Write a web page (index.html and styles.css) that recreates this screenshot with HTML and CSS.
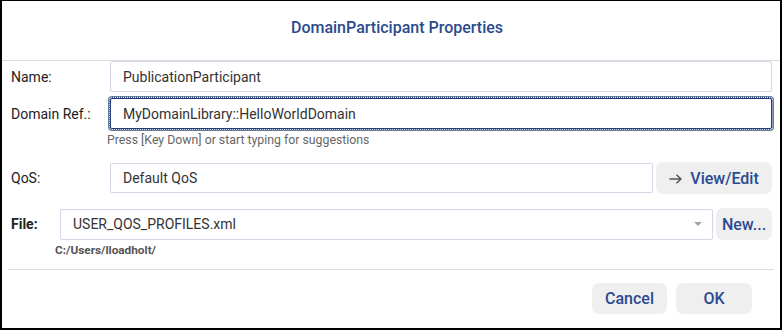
FILE: index.html
```html
<!DOCTYPE html>
<html>
<head>
<meta charset="utf-8">
<link rel="stylesheet" href="styles.css">
</head>
<body>
<div class="dialog">
  <div class="header">DomainParticipant Properties</div>
  <div class="content">
    <div class="row row-name">
      <div class="label">Name:</div>
      <div class="input">PublicationParticipant</div>
    </div>
    <div class="row row-domain">
      <div class="label">Domain Ref.:</div>
      <div class="input focused">MyDomainLibrary::HelloWorldDomain</div>
    </div>
    <div class="hint">Press [Key Down] or start typing for suggestions</div>
    <div class="row row-qos">
      <div class="label">QoS:</div>
      <div class="input qos">Default QoS</div>
      <div class="btn view">
        <svg class="arrow" width="13" height="10" viewBox="0 0 13 10"><path d="M0.5 5 H12 M7.5 0.8 L12 5 L7.5 9.2" fill="none" stroke="#555" stroke-width="1.5"/></svg>
        <span>View/Edit</span>
      </div>
    </div>
    <div class="row row-file">
      <div class="label file-label">File:</div>
      <div class="input select">
        <span>USER_QOS_PROFILES.xml</span>
        <span class="caret"></span>
      </div>
      <div class="btn new">New...</div>
    </div>
    <div class="path">C:/Users/lloadholt/</div>
    <div class="sep"></div>
    <div class="footer">
      <div class="btn foot cancel">Cancel</div>
      <div class="btn foot ok">OK</div>
    </div>
  </div>
</div>
</body>
</html>
```
FILE: styles.css
```css
* { box-sizing: border-box; }
html, body { margin: 0; padding: 0; background: #fff; }
body { font-family: Roboto, "Liberation Sans", sans-serif; color: #333; }
.dialog {
  width: 782px;
  height: 330px;
  border: 2px solid #000;
  border-top-width: 1px;
  display: flex;
  flex-direction: column;
  overflow: hidden;
}
.header {
  height: 60px;
  border-bottom: 1px solid #dddddd;
  display: flex;
  align-items: center;
  justify-content: center;
  padding-bottom: 6px;
  padding-left: 12px;
  font-size: 16px;
  font-weight: 500;
  color: #2b4a8c;
}
.content {
  display: flex;
  flex-direction: column;
  padding: 0 8px 0 9px;
}
.row {
  display: flex;
  align-items: center;
}
.label {
  width: 99px;
  flex: none;
  font-size: 14px;
  color: #222;
}
.file-label { width: 49px; font-weight: 700; }
.input {
  flex: 1;
  height: 31px;
  border: 1px solid #cfd8e4;
  border-radius: 2px;
  padding-left: 12px;
  display: flex;
  align-items: center;
  font-size: 14px;
  color: #333;
}
.row-domain { margin-top: 6px; }
.focused {
  border-color: #1f3e7a;
  outline: 1px dotted #1f3e7a;
  outline-offset: 0;
  box-shadow: 0 0 0 1px #fff, 0 0 0 2px #6a7a99;
}
.hint {
  margin-top: 3px;
  margin-left: 96px;
  height: 16px;
  line-height: 16px;
  font-size: 12.3px;
  color: #666;
}
.row-qos { margin-top: 14px; }
.qos { height: 30px; }
.btn {
  background: #efefef;
  border-radius: 7px;
  color: #2a4a8f;
  font-size: 16px;
  font-weight: 500;
  display: flex;
  align-items: center;
  justify-content: center;
  flex: none;
}
.view {
  width: 116px;
  height: 32px;
  margin-left: 3px;
  gap: 8px;
}
.arrow { display: block; margin-top: 1px; }
.row-file { margin-top: 14px; }
.select {
  justify-content: space-between;
  padding-right: 10px;
}
.caret {
  width: 0; height: 0;
  border-left: 4px solid transparent;
  border-right: 4px solid transparent;
  border-top: 4px solid #9aa3b0;
}
.new {
  width: 56px;
  height: 32px;
  margin-left: 3px;
}
.path {
  margin-top: 3px;
  margin-left: 44px;
  height: 14px;
  line-height: 14px;
  font-size: 11.8px;
  font-weight: 700;
  color: #555;
}
.sep {
  margin: 12px -2px 0 -3px;
  border-top: 1px solid #dddddd;
}
.footer {
  display: flex;
  justify-content: flex-end;
  gap: 9px;
  margin-top: 13px;
  padding-right: 20px;
}
.foot { height: 31px; }
.cancel { width: 75px; }
.ok { width: 76px; }
```
